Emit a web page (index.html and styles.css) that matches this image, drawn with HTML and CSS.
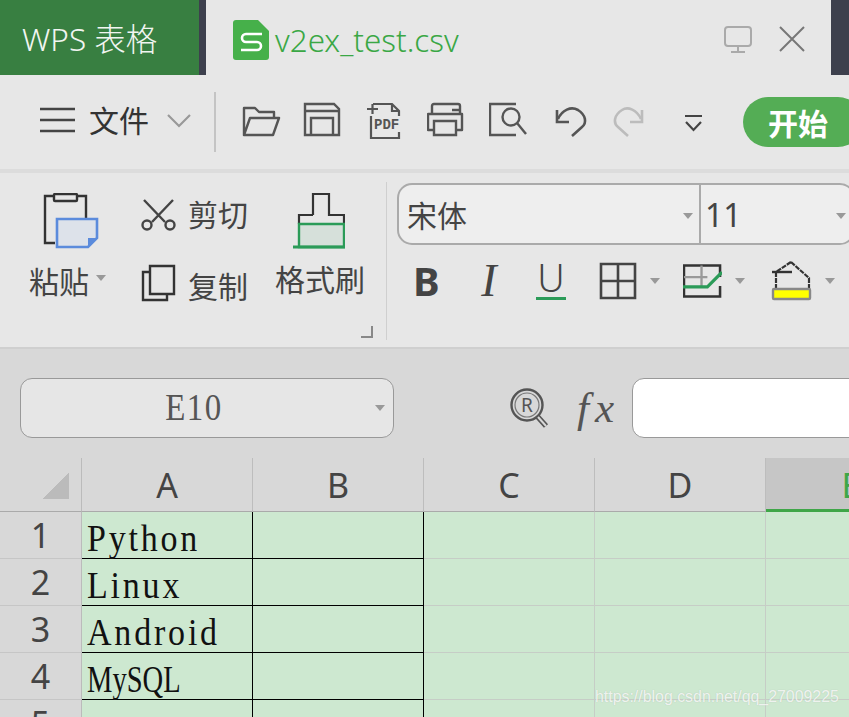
FILE: index.html
```html
<!DOCTYPE html>
<html lang="zh">
<head>
<meta charset="utf-8">
<title>v2ex_test.csv</title>
<link rel="stylesheet" href="styles.css">
</head>
<body>
<div class="page">
  <header class="tabbar">
    <div class="brand">WPS 表格</div>
    <div class="sep"></div>
    <div class="doc">
      <svg class="doc-icon" viewBox="0 0 36 40"><path d="M3 0H25L36 11V37A3 3 0 0 1 33 40H3A3 3 0 0 1 0 37V3A3 3 0 0 1 3 0Z" fill="#46b04a"/><path d="M29 14H13A4 4 0 0 0 13 22H24A4 4 0 0 1 24 30H8" fill="none" stroke="#fff" stroke-width="2.6"/></svg>
      <span class="doc-name">v2ex_test.csv</span>
      <svg class="monitor" viewBox="0 0 28 27"><rect x="1" y="1" width="26" height="19" rx="3" fill="none" stroke="#aaa" stroke-width="2"/><path d="M14 20V26M7 26H21" stroke="#aaa" stroke-width="2"/></svg>
      <svg class="close" viewBox="0 0 26 26"><path d="M1 1L25 25M25 1L1 25" stroke="#777" stroke-width="2"/></svg>
    </div>
    <div class="strip"></div>
  </header>

  <nav class="quick">
    <svg class="burger" viewBox="0 0 35 26"><path d="M0 2H35M0 13H35M0 24H35" stroke="#444" stroke-width="2.4"/></svg>
    <span class="file-label">文件</span>
    <svg class="file-chevron" viewBox="0 0 24 14"><path d="M1 1L12 12L23 1" fill="none" stroke="#999" stroke-width="2.2"/></svg>
    <div class="quick-div"></div>
    <div class="quick-icons">
      <svg class="qi" viewBox="0 0 40 40"><path d="M3 35V8H14L18 12H33V17M3 35H32L38 18H9L3 35Z" fill="none" stroke="#555" stroke-width="2.4" stroke-linejoin="round"/></svg>
      <svg class="qi" viewBox="0 0 40 40"><path d="M2 4H31L36 9V35H2Z" fill="none" stroke="#555" stroke-width="2.4"/><path d="M2 11H36M8 35V18H30V35" fill="none" stroke="#555" stroke-width="2.4"/></svg>
      <svg class="qi" viewBox="0 0 40 40"><path d="M8 4H27L34 11V16M34 32V38H6V16M34 11H27V4" fill="none" stroke="#555" stroke-width="2.2"/><path d="M2 9H13M7.500 4V14" stroke="#555" stroke-width="2.200"/><text class="pdf" x="9" y="29">PDF</text></svg>
      <svg class="qi" viewBox="0 0 40 40"><path d="M5 13V6Q5 4 7 4H31Q33 4 33 6V13M7 30H1V14H35V30H29" fill="none" stroke="#555" stroke-width="2.4" stroke-linejoin="round"/><path d="M7 21H29V35H7ZM25 10H32" fill="none" stroke="#555" stroke-width="2.400"/></svg>
      <svg class="qi" viewBox="0 0 40 40"><path d="M27 35H1V4H27" fill="none" stroke="#555" stroke-width="2.4"/><circle cx="22" cy="17" r="8.500" fill="#e7e7e7" stroke="#555" stroke-width="2.400"/><path d="M28 23L37 34" stroke="#555" stroke-width="2.400"/></svg>
      <svg class="qi" viewBox="0 0 40 40"><path d="M7 19C11 10 20 6 27 10C35 15 36 23 31 27L21 36" fill="none" stroke="#555" stroke-width="2.600"/><path d="M6 10V22H18" fill="none" stroke="#555" stroke-width="2.600"/></svg>
      <svg class="qi" viewBox="0 0 40 40"><path d="M28 19C24 10 15 6 9 10C1 15 0 23 5 27L15 36" fill="none" stroke="#bcbcbc" stroke-width="2.600"/><path d="M29 10V22H17" fill="none" stroke="#bcbcbc" stroke-width="2.600"/></svg>
    </div>
    <svg class="more" viewBox="0 0 19 18"><path d="M1 2H18" stroke="#444" stroke-width="2"/><path d="M2 8L9.500 16L17 8" fill="none" stroke="#444" stroke-width="2.200"/></svg>
    <button class="start">开始</button>
  </nav>

  <section class="ribbon">
    <div class="clip">
      <div class="paste">
        <svg class="paste-icon" viewBox="0 0 56 56"><path d="M12 50H2V3H43V25" fill="none" stroke="#333" stroke-width="2.400"/><rect x="11" y="1" width="23" height="7" rx="1" fill="#e7e7e7" stroke="#333" stroke-width="2.400"/><path d="M14 26H54V45L45 54H14Z" fill="#dde2ea" stroke="#5b8bdc" stroke-width="2.600"/><path d="M45 54V45H54Z" fill="#5b8bdc"/></svg>
        <div class="paste-label"><span>粘贴</span><i class="caret"></i></div>
      </div>
      <div class="cutcopy">
        <div class="cc-row cc-cut">
          <svg class="cc-icon" viewBox="0 0 35 32"><path d="M3 1L24 23M32 1L11 23" stroke="#444" stroke-width="2.400"/><circle cx="6" cy="26" r="4.500" fill="none" stroke="#444" stroke-width="2.400"/><circle cx="29" cy="26" r="4.500" fill="none" stroke="#444" stroke-width="2.400"/></svg>
          <span>剪切</span>
        </div>
        <div class="cc-row cc-copy">
          <svg class="cc-icon cc-icon-copy" viewBox="0 0 35 38"><path d="M9 2H33V30H9Z" fill="none" stroke="#333" stroke-width="2.400"/><path d="M9 8H2V36H26V30" fill="none" stroke="#333" stroke-width="2.400"/></svg>
          <span>复制</span>
        </div>
      </div>
      <div class="brush">
        <svg class="brush-icon" viewBox="0 0 52 56"><path d="M20 22V1H36V22H51V31M6 31V22H20" fill="none" stroke="#333" stroke-width="2.200"/><path d="M6 31H51V54H6Z" fill="#d6e0da" stroke="#2b9b58" stroke-width="2.400"/><path d="M0 54H52" stroke="#2b9b58" stroke-width="2.800"/></svg>
        <div class="brush-label">格式刷</div>
      </div>
      <svg class="corner" viewBox="0 0 12 12"><path d="M11 0V11H0" fill="none" stroke="#888" stroke-width="2"/></svg>
    </div>
    <div class="font-panel">
      <div class="combo">
        <div class="combo-font"><span>宋体</span><i class="caret"></i></div>
        <div class="combo-size"><span>11</span><i class="caret"></i></div>
      </div>
      <div class="fmt">
        <span class="fmt-b">B</span>
        <span class="fmt-i">I</span>
        <span class="fmt-u">U</span>
        <svg class="fmt-borders" viewBox="0 0 38 38"><path d="M2 2H36V36H2ZM19 2V36M2 19H36" fill="none" stroke="#444" stroke-width="2.600"/></svg>
        <i class="caret caret-fmt"></i>
        <svg class="fmt-cond" viewBox="0 0 40 38"><path d="M38 15V3H1V35H38V24" fill="none" stroke="#333" stroke-width="2.600"/><path d="M19 3V25M1 15H25" stroke="#999" stroke-width="2.400"/><path d="M0 25H25L40 10" fill="none" stroke="#2b9b58" stroke-width="3.200"/></svg>
        <i class="caret caret-fmt"></i>
        <svg class="fmt-fill" viewBox="0 0 41 40"><path d="M20 1L38 17V28M5 28V11L20 1" fill="none" stroke="#333" stroke-width="2.200" stroke-dasharray="5 1"/><path d="M1 11H21" stroke="#333" stroke-width="2.400"/><rect x="2" y="28" width="37" height="10" rx="1" fill="#ffff00" stroke="#888" stroke-width="2.400"/></svg>
        <i class="caret caret-fmt"></i>
      </div>
    </div>
  </section>

  <section class="formula">
    <div class="namebox"><span class="name-text">E10</span><i class="caret"></i></div>
    <svg class="zoom-icon" viewBox="0 0 41 41"><circle cx="17" cy="17" r="15.500" fill="none" stroke="#555" stroke-width="2.400"/><circle cx="17" cy="17" r="12" fill="none" stroke="#777" stroke-width="1.200"/><text class="zoom-r" x="17" y="24">R</text><path d="M27 28L36 38" stroke="#555" stroke-width="5.500"/><path d="M28 29L36 38" stroke="#d8d8d8" stroke-width="2"/></svg>
    <span class="fx">fx</span>
    <div class="input"></div>
  </section>

  <section class="sheet">
    <div class="corner-cell"><i class="tri"></i></div>
    <div class="col">A</div><div class="col">B</div><div class="col">C</div><div class="col">D</div><div class="col col-sel">E</div>

    <div class="rowh">1</div><div class="cell cell-b"><span class="val">Python</span></div><div class="cell cell-b"></div><div class="cell"></div><div class="cell"></div><div class="cell"></div>
    <div class="rowh">2</div><div class="cell cell-b"><span class="val">Linux</span></div><div class="cell cell-b"></div><div class="cell"></div><div class="cell"></div><div class="cell"></div>
    <div class="rowh">3</div><div class="cell cell-b"><span class="val">Android</span></div><div class="cell cell-b"></div><div class="cell"></div><div class="cell"></div><div class="cell"></div>
    <div class="rowh">4</div><div class="cell cell-b"><span class="val val-tight">MySQL</span></div><div class="cell cell-b"></div><div class="cell"></div><div class="cell"></div><div class="cell"></div>
    <div class="rowh">5</div><div class="cell cell-b"></div><div class="cell cell-b"></div><div class="cell"></div><div class="cell"></div><div class="cell"></div>
  </section>

  <div class="watermark">https://blog.csdn.net/qq_27009225</div>
</div>
</body>
</html>
```

FILE: styles.css
```css
* { box-sizing: border-box; }
html, body { margin: 0; padding: 0; }
body { width: 849px; height: 717px; overflow: hidden; font-family: "Noto Sans", "Noto Sans CJK SC", sans-serif; background: #e7e7e7; color: #444; }
.page { position: relative; width: 849px; height: 717px; overflow: hidden; }
i { display: block; }

.caret { width: 0; height: 0; border-style: solid; border-width: 6px 5.500px 0 5.500px; border-color: #999 transparent transparent transparent; flex: none; }

/* tab bar */
.tabbar { display: flex; height: 75px; background: #e7e7e7; }
.brand { width: 199px; padding-left: 22px; background: #387f41; color: #f1f5f1; font-size: 31.500px; font-weight: 300; line-height: 78px; white-space: nowrap; }
.sep { width: 7px; background: #3d404d; }
.doc { flex: 1; display: flex; align-items: center; padding-left: 27px; }
.doc-icon { width: 36px; height: 40px; margin-top: 4px; flex: none; }
.doc-name { margin-left: 6px; font-size: 31.400px; color: #3aa745; white-space: nowrap; width: 449px; margin-top: 4px; font-weight: 300; }
.monitor { width: 28px; height: 27px; flex: none; margin-top: 3px; }
.close { width: 26px; height: 26px; flex: none; margin-left: 27px; margin-top: 2px; }
.strip { width: 18px; background: #3d404d; }

/* quick access */
.quick { display: flex; align-items: center; height: 98px; padding-left: 40px; padding-bottom: 4px; border-bottom: 4px solid #dcdcdc; white-space: nowrap; }
.burger { width: 35px; height: 26px; flex: none; }
.file-label { margin: 2px 0 0 14px; font-size: 30px; line-height: 40px; color: #333; width: 61px; }
.file-chevron { width: 24px; height: 14px; margin-left: 18px; flex: none; margin-top: 2px; }
.quick-div { width: 2px; height: 60px; margin-left: 23px; background: #c4c4c4; flex: none; margin-top: 4px; }
.quick-icons { display: flex; gap: 22px; margin-left: 25px; flex: none; }
.qi { width: 40px; height: 40px; flex: none; }
.pdf { font: bold 14px "Liberation Mono", monospace; fill: #555; stroke: #e7e7e7; stroke-width: 3px; paint-order: stroke; }
.more { width: 19px; height: 18px; margin-left: 31px; flex: none; margin-top: 6px; }
.start { margin: 4px 0 0 40px; width: 120px; height: 50px; padding: 0 0 0 25px; border: 0; border-radius: 25px; background: #54ad55; color: #fff; font: bold 30px/50px "Noto Sans CJK SC", sans-serif; text-align: left; flex: none; }

/* ribbon */
.ribbon { display: flex; height: 176px; border-bottom: 2px solid #cfcfcf; background: #e7e7e7; }
.clip { position: relative; display: flex; width: 387px; padding-top: 20px; flex: none; }
.clip::after { content: ""; position: absolute; right: 0; top: 9px; height: 158px; width: 1px; background: #cfcfcf; }
.paste { width: 141px; padding-left: 29px; flex: none; }
.paste-icon { display: block; width: 56px; height: 56px; margin-left: 14px; }
.paste-label { display: flex; gap: 7px; align-items: center; margin-top: 16px; font-size: 30px; line-height: 34px; }
.paste-label .caret { margin-top: -8px; }
.cutcopy { width: 134px; flex: none; }
.cc-row { display: flex; gap: 12px; align-items: center; font-size: 30px; line-height: 40px; }
.cc-cut { margin-top: 2px; }
.cc-copy { margin-top: 32px; }
.cc-icon { width: 35px; height: 32px; flex: none; }
.cc-icon-copy { height: 38px; margin-top: -8px; }
.brush { flex: 1; }
.brush-icon { display: block; width: 52px; height: 56px; margin-left: 18px; }
.brush-label { margin-top: 14px; font-size: 30px; line-height: 34px; white-space: nowrap; }
.corner { position: absolute; left: 361px; top: 153px; width: 12px; height: 12px; }

.font-panel { flex: 1; min-width: 0; padding: 10px 0 0 10px; }
.combo { display: flex; width: 458px; height: 62px; border: 2px solid #aaa; border-radius: 15px; background: #eee; }
.combo-font { display: flex; align-items: center; justify-content: space-between; width: 302px; padding: 0 6px 0 8px; border-right: 2px solid #aaa; font-size: 30px; }
.combo-size { display: flex; flex: 1; align-items: center; justify-content: space-between; padding: 0 7px 0 4px; font-size: 32px; }
.combo .caret { margin-top: 4px; }
.fmt { display: flex; align-items: center; height: 42px; margin-top: 15px; padding-left: 16px; }
.fmt-b { width: 27px; font: bold 40px/42px "Noto Sans", sans-serif; color: #444; flex: none; }
.fmt-i { width: 22px; margin-left: 38px; font: italic 46px/42px "Liberation Serif", serif; color: #444; text-align: center; flex: none; }
.fmt-u { width: 30px; margin-left: 36px; height: 38px; border-bottom: 3px solid #2b9b58; font: 300 38px/30px "Noto Sans", sans-serif; color: #444; text-align: center; flex: none; }
.fmt-borders { width: 38px; height: 38px; margin-left: 33px; flex: none; }
.fmt-cond { width: 39px; height: 38px; margin-left: 23px; flex: none; }
.fmt-fill { width: 41px; height: 40px; margin-left: 26px; flex: none; }
.caret-fmt { margin-left: 13px; }

/* formula bar */
.formula { display: flex; align-items: center; height: 109px; padding: 29px 0 20px 20px; background: #d8d8d8; }
.namebox { display: flex; align-items: center; width: 374px; height: 60px; padding-right: 8px; border: 1px solid #999; border-radius: 12px; background: #e6e6e6; flex: none; }
.name-text { flex: 1; text-align: center; padding-right: 8px; font: 33px/62px "Liberation Serif", serif; letter-spacing: 1.500px; color: #555; transform: scaleY(1.12); }
.namebox .caret { margin-top: 0; }
.zoom-icon { width: 41px; height: 41px; margin-left: 116px; flex: none; }
.zoom-r { font: 19px "Noto Sans", sans-serif; fill: #555; text-anchor: middle; }
.fx { width: 40px; margin-left: 26px; font: italic 43px/40px "Liberation Serif", serif; letter-spacing: 6px; color: #555; white-space: nowrap; flex: none; }
.input { width: 260px; height: 60px; margin-left: 15px; border: 1px solid #999; border-radius: 12px; background: #fff; flex: none; }

/* sheet */
.sheet { display: grid; grid-template-columns: 82px repeat(5, 171px); grid-template-rows: 54px repeat(5, 47px); background: #cde8d0; }
.corner-cell { position: relative; background: #d8d8d8; border-right: 1px solid #bbb; border-bottom: 1px solid #aaa; }
.tri { position: absolute; left: 42px; top: 14px; width: 27px; height: 27px; background: linear-gradient(135deg, transparent 50%, #bbb 50%); }
.col { background: #d8d8d8; border-right: 1px solid #bdbdbd; border-bottom: 1px solid #aaa; text-align: center; font-size: 34px; line-height: 54px; color: #444; }
.col-sel { background: #c6c6c6; border-bottom: 3px solid #3fa648; color: #3fa648; }
.rowh { background: #d8d8d8; border-right: 1px solid #bbb; border-bottom: 1px solid #c6c6c6; text-align: center; font-size: 34px; line-height: 47px; color: #444; }
.cell { border-right: 1px solid #c6cdc6; border-bottom: 1px solid #c6cdc6; padding-left: 5px; font: 34px/56px "Liberation Serif", serif; letter-spacing: 2.800px; color: #111; white-space: nowrap; }
.cell-b { border-right-color: #000; border-bottom-color: #000; }
.val { display: inline-block; transform: scaleY(1.14); transform-origin: 0 71%; }
.val-tight { letter-spacing: 0; transform: scale(0.84, 1.14); }

.watermark { position: absolute; left: 595px; top: 688px; font: 15.900px/18px "Liberation Sans", sans-serif; color: rgba(255, 255, 255, 0.8); text-shadow: 0 0 1px rgba(120, 120, 120, 0.35); white-space: nowrap; }
```
